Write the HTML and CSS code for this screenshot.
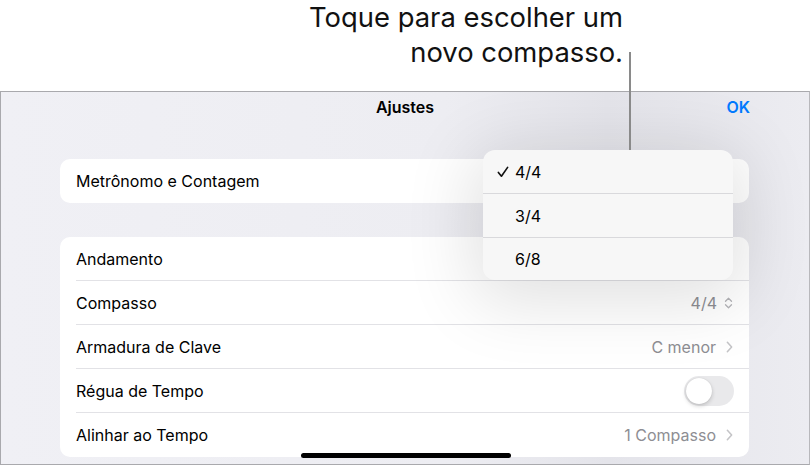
FILE: index.html
```html
<!DOCTYPE html>
<html lang="pt">
<head>
<meta charset="utf-8">
<link rel="stylesheet" href="styles.css">
</head>
<body>
<div class="page">
  <div class="callout">
    <p class="callout-text">Toque para escolher um<br>novo compasso.</p>
    <div class="leader"></div>
  </div>
  <div class="sheet">
    <div class="navbar">
      <div class="nav-side"></div>
      <div class="nav-title">Ajustes</div>
      <div class="nav-side nav-ok">OK</div>
    </div>
    <div class="card card-first">
      <div class="row">
        <span class="label">Metrônomo e Contagem</span>
        <span class="value"><svg class="chev" viewBox="0 0 8 14"><path d="M1.5 1.5 L6.5 7 L1.5 12.5"/></svg></span>
      </div>
    </div>
    <div class="card">
      <div class="row">
        <span class="label">Andamento</span>
        <span class="value"><svg class="chev" viewBox="0 0 8 14"><path d="M1.5 1.5 L6.5 7 L1.5 12.5"/></svg></span>
      </div>
      <div class="row">
        <span class="label">Compasso</span>
        <span class="value">4/4 <svg class="updown" viewBox="0 0 10 14"><path d="M1.5 5 L5 1.5 L8.5 5 M1.5 9 L5 12.5 L8.5 9"/></svg></span>
      </div>
      <div class="row">
        <span class="label">Armadura de Clave</span>
        <span class="value value-chev">C menor <svg class="chev" viewBox="0 0 8 14"><path d="M1.5 1.5 L6.5 7 L1.5 12.5"/></svg></span>
      </div>
      <div class="row">
        <span class="label">Régua de Tempo</span>
        <span class="toggle"><span class="knob"></span></span>
      </div>
      <div class="row">
        <span class="label">Alinhar ao Tempo</span>
        <span class="value value-chev">1 Compasso <svg class="chev" viewBox="0 0 8 14"><path d="M1.5 1.5 L6.5 7 L1.5 12.5"/></svg></span>
      </div>
    </div>
    <div class="home-indicator"></div>
    <div class="popover">
      <div class="pop-item"><svg class="check" viewBox="0 0 13 13"><path d="M1.5 7 L4.8 11 L11.5 1.5"/></svg>4/4</div>
      <div class="pop-item"><span class="check"></span>3/4</div>
      <div class="pop-item"><span class="check"></span>6/8</div>
    </div>
  </div>
</div>
</body>
</html>
```

FILE: styles.css
```css
* { box-sizing: border-box; }
html, body { margin: 0; padding: 0; background: #ffffff; }
body { font-family: Inter, "Liberation Sans", sans-serif; color: #000; width: 811px; height: 466px; overflow: hidden; }
.page { width: 811px; height: 466px; position: relative; }

.callout { height: 91px; position: relative; }
.callout-text {
  margin: 0;
  position: absolute;
  right: 188px;
  top: 0;
  text-align: right;
  font-size: 27.4px;
  line-height: 35px;
  color: #111;
}
.leader {
  position: absolute;
  left: 629px;
  top: 52px;
  width: 2px;
  height: 98px;
  background: #8a8a8a;
  z-index: 5;
}

.sheet {
  position: relative;
  width: 810px;
  height: 374px;
  border: 1px solid #a9a9ad;
  border-right-color: #b8b8bc;
  background: linear-gradient(90deg, #f0f0f5 0%, #ededf2 55%, #e4e4ea 75%, #ececf1 100%);
  overflow: hidden;
}
.navbar {
  height: 67px;
  display: grid;
  grid-template-columns: 1fr auto 1fr;
  align-items: start;
  padding: 5px 59px 0 59px;
}
.nav-title { font-weight: 600; font-size: 16px; line-height: 20px; }
.nav-ok { color: #007aff; font-weight: 600; font-size: 16px; text-align: right; line-height: 20px; }

.card {
  background: #ffffff;
  border-radius: 10px;
  overflow: hidden;
  margin: 0 60px 0 59px;
}
.card-first { margin-bottom: 34px; }
.row {
  height: 44px;
  display: flex;
  align-items: center;
  justify-content: space-between;
  margin-left: 16px;
  padding-right: 16px;
  border-bottom: 1px solid #e2e2e6;
  font-size: 16px;
}
.row:last-child { border-bottom: none; }
.label { color: #000; }
.value { color: #8e8e93; display: flex; align-items: center; gap: 7px; }
.value-chev { gap: 10px; }
.chev { width: 7px; height: 12px; fill: none; stroke: #c4c4c7; stroke-width: 1.8; stroke-linecap: round; stroke-linejoin: round; }
.updown { width: 9px; height: 12px; fill: none; stroke: #b4b4b8; stroke-width: 1.5; stroke-linecap: round; stroke-linejoin: round; }

.toggle {
  width: 50px; height: 30px;
  border-radius: 15px;
  background: #e9e9eb;
  position: relative;
  margin-right: -1px;
}
.knob {
  position: absolute;
  left: 2px; top: 2px;
  width: 26px; height: 26px;
  border-radius: 50%;
  background: #ffffff;
  box-shadow: 0 2px 4px rgba(0,0,0,0.18), 0 0 1px rgba(0,0,0,0.15);
}

.home-indicator {
  position: absolute;
  left: 300px;
  bottom: 6px;
  width: 210px;
  height: 5px;
  border-radius: 3px;
  background: #000;
}

.popover {
  position: absolute;
  left: 482px;
  top: 58px;
  width: 250px;
  border-radius: 12px;
  background: #f7f7f7;
  box-shadow: 0 12px 70px 10px rgba(0,0,0,0.12);
  overflow: hidden;
  z-index: 3;
}
.pop-item {
  height: 44px;
  display: flex;
  align-items: center;
  font-size: 16px;
  border-bottom: 1px solid #d9d9dc;
  padding-left: 14px;
}
.pop-item:last-child { border-bottom: none; height: 42px; }
.check { width: 12px; height: 12px; margin-right: 6px; fill: none; stroke: #111; stroke-width: 1.8; stroke-linecap: round; stroke-linejoin: round; display: inline-block; }
```
